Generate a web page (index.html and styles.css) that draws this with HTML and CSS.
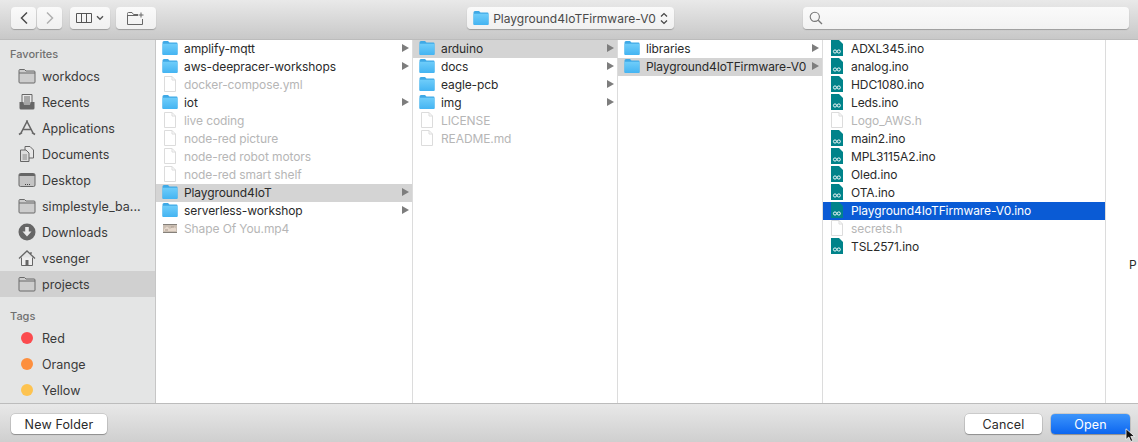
FILE: index.html
```html
<!DOCTYPE html>
<html lang="en">
<head>
  <meta charset="UTF-8">
  <title>Open</title>
  <link rel="stylesheet" href="styles.css">
</head>
<body>

  <svg class="defs" width="0" height="0">
    <defs>
      <linearGradient id="blue" x1="0" y1="0" x2="0" y2="1">
        <stop offset="0" stop-color="#6fcdfa"/>
        <stop offset="1" stop-color="#44b4f2"/>
      </linearGradient>
      <symbol id="folder" viewBox="0 0 16 16">
        <path d="M.5 2.5Q.5 1 2 1H6L7.5 2.5H14.5Q15.5 2.5 15.5 3.5V14Q15.5 15 14.5 15H1.5Q.5 15 .5 14Z" fill="#3fa9e6"/>
        <path d="M.5 4.6Q.5 3.7 1.5 3.7H14.5Q15.5 3.7 15.5 4.6V14Q15.5 15 14.5 15H1.5Q.5 15 .5 14Z" fill="url(#blue)"/>
      </symbol>
      <symbol id="file" viewBox="0 0 16 16">
        <path d="M2.5 .5H10L13.5 4V15.5H2.5Z" fill="#fff" stroke="#dcdcdc"/>
        <path d="M10 .5V4H13.5" fill="none" stroke="#dcdcdc"/>
      </symbol>
      <symbol id="ino" viewBox="0 0 16 16">
        <path d="M2 0H10L14 4V16H2Z" fill="#00838a"/>
        <circle cx="6" cy="11.5" r="1.6" fill="none" stroke="#fff" stroke-width=".9"/>
        <circle cx="9.8" cy="11.5" r="1.6" fill="none" stroke="#fff" stroke-width=".9"/>
      </symbol>
      <symbol id="side-folder" viewBox="0 0 18 16">
        <path d="M1 2.5Q1 1.5 2 1.5H6.5L8 3H16Q17 3 17 4V14Q17 15 16 15H2Q1 15 1 14Z" fill="#cdcdcd" stroke="#6a6a6a"/>
        <path d="M1 5H17" stroke="#6a6a6a"/>
      </symbol>
      <symbol id="recents" viewBox="0 0 18 18">
        <path d="M4 1.5H14V10H4Z" fill="#e8e8e8" stroke="#666"/>
        <path d="M6 4H12M6 6H12M6 8H12" stroke="#666"/>
        <path d="M1.5 9H5L6 11.5H12L13 9H16.5V15Q16.5 16.5 15 16.5H3Q1.5 16.5 1.5 15Z" fill="#666"/>
      </symbol>
      <symbol id="apps" viewBox="0 0 18 18">
        <path d="M9.5 1.5L3 14M8.5 1.5L15 14M5 10.5H13M1 15.5L4 13.5M17 15.5L14 13.5" fill="none" stroke="#666" stroke-width="1.6"/>
      </symbol>
      <symbol id="docs" viewBox="0 0 18 18">
        <path d="M7 1.5H12L15.5 5V13H7Z" fill="#e8e8e8" stroke="#666"/>
        <path d="M2.5 5H8L11 8V16.5H2.5Z" fill="#ddd" stroke="#666"/>
        <path d="M4.5 10H9M4.5 12H9M4.5 14H9" stroke="#888"/>
      </symbol>
      <symbol id="desktop" viewBox="0 0 18 16">
        <rect x="1" y="1.5" width="16" height="13" rx="1.5" fill="#c4c4c4" stroke="#666"/>
        <path d="M1 3.5Q1 1.5 3 1.5H15Q17 1.5 17 3.5V4H1Z" fill="#666"/>
        <path d="M7 12.5H8M9 12.5H10M11 12.5H12" stroke="#444"/>
      </symbol>
      <symbol id="download" viewBox="0 0 18 18">
        <circle cx="9" cy="9" r="8.5" fill="#666"/>
        <path d="M7.2 4H10.8V8.5H13.5L9 13.5L4.5 8.5H7.2Z" fill="#e8e8e8"/>
      </symbol>
      <symbol id="home" viewBox="0 0 18 18">
        <path d="M1 9.5L9 2L17 9.5M13 3V6" fill="none" stroke="#666" stroke-width="1.3"/>
        <path d="M3.5 8.5V16.5H14.5V8.5" fill="#eee" stroke="#666"/>
        <path d="M7.5 11H10.5V16.5H7.5Z" fill="#666"/>
      </symbol>
    </defs>
  </svg>

  <div class="dialog">

    <header class="toolbar">
      <div class="btn-group">
        <button class="btn btn-nav">
          <svg width="10" height="14" viewBox="0 0 10 14"><path d="M8 1.5L2.5 7L8 12.5" fill="none" stroke="#4a4a4a" stroke-width="1.5"/></svg>
        </button>
        <button class="btn btn-nav btn-next">
          <svg width="10" height="14" viewBox="0 0 10 14"><path d="M2 1.5L7.5 7L2 12.5" fill="none" stroke="#b0b0b0" stroke-width="1.5"/></svg>
        </button>
      </div>
      <button class="btn btn-view">
        <svg width="16" height="10" viewBox="0 0 16 10"><path d="M.5 .5H15.5V9.5H.5ZM5.5 .5V9.5M10.5 .5V9.5" fill="none" stroke="#555"/></svg>
        <svg width="8" height="6" viewBox="0 0 8 6"><path d="M1 1.2L4 4.2L7 1.2" fill="none" stroke="#555" stroke-width="1.4"/></svg>
      </button>
      <button class="btn btn-new">
        <svg width="18" height="13" viewBox="0 0 18 13"><path d="M.5 2.5V1.5Q.5 .5 1.5 .5H5L6.5 2.5H11M.5 2.5V12.5H15.5V7M.5 3.5H11M14 .5V5.5M11.5 3H16.5" fill="none" stroke="#666"/></svg>
      </button>
      <button class="btn btn-path">
        <svg class="ico" width="16" height="16"><use href="#folder"/></svg>
        <span class="path-name">Playground4IoTFirmware-V0</span>
        <svg width="8" height="13" viewBox="0 0 8 13"><path d="M1 4.5L4 1.5L7 4.5M1 8.5L4 11.5L7 8.5" fill="none" stroke="#444" stroke-width="1.2"/></svg>
      </button>
      <div class="search">
        <svg width="14" height="14" viewBox="0 0 14 14"><circle cx="5.8" cy="5.8" r="4.6" fill="none" stroke="#777" stroke-width="1.1"/><path d="M9.2 9.2L13 13" stroke="#777" stroke-width="1.3"/></svg>
      </div>
    </header>

    <div class="main">
      <aside class="sidebar">
        <div class="side-head">Favorites</div>
        <div class="side-item"><svg class="side-ico"><use href="#side-folder"/></svg>workdocs</div>
        <div class="side-item"><svg class="side-ico"><use href="#recents"/></svg>Recents</div>
        <div class="side-item"><svg class="side-ico"><use href="#apps"/></svg>Applications</div>
        <div class="side-item"><svg class="side-ico"><use href="#docs"/></svg>Documents</div>
        <div class="side-item"><svg class="side-ico"><use href="#desktop"/></svg>Desktop</div>
        <div class="side-item"><svg class="side-ico"><use href="#side-folder"/></svg>simplestyle_ba...</div>
        <div class="side-item"><svg class="side-ico"><use href="#download"/></svg>Downloads</div>
        <div class="side-item"><svg class="side-ico"><use href="#home"/></svg>vsenger</div>
        <div class="side-item active"><svg class="side-ico"><use href="#side-folder"/></svg>projects</div>
        <div class="side-head side-head-tags">Tags</div>
        <div class="side-item"><span class="tag tag-red"></span>Red</div>
        <div class="side-item"><span class="tag tag-orange"></span>Orange</div>
        <div class="side-item"><span class="tag tag-yellow"></span>Yellow</div>
      </aside>

      <section class="col col-1">
        <div class="row"><svg class="ico"><use href="#folder"/></svg><span class="name">amplify-mqtt</span><i class="arrow"></i></div>
        <div class="row"><svg class="ico"><use href="#folder"/></svg><span class="name">aws-deepracer-workshops</span><i class="arrow"></i></div>
        <div class="row dim"><svg class="ico"><use href="#file"/></svg><span class="name">docker-compose.yml</span></div>
        <div class="row"><svg class="ico"><use href="#folder"/></svg><span class="name">iot</span><i class="arrow"></i></div>
        <div class="row dim"><svg class="ico"><use href="#file"/></svg><span class="name">live coding</span></div>
        <div class="row dim"><svg class="ico"><use href="#file"/></svg><span class="name">node-red picture</span></div>
        <div class="row dim"><svg class="ico"><use href="#file"/></svg><span class="name">node-red robot motors</span></div>
        <div class="row dim"><svg class="ico"><use href="#file"/></svg><span class="name">node-red smart shelf</span></div>
        <div class="row open"><svg class="ico"><use href="#folder"/></svg><span class="name">Playground4IoT</span><i class="arrow"></i></div>
        <div class="row"><svg class="ico"><use href="#folder"/></svg><span class="name">serverless-workshop</span><i class="arrow"></i></div>
        <div class="row dim">
          <svg class="ico" viewBox="0 0 16 16"><rect x="1" y="4" width="14" height="9" fill="#cbbfb3"/><rect x="1" y="4" width="14" height="1" fill="#85807a"/><rect x="1" y="12" width="14" height="1" fill="#85807a"/><path d="M2 9L5 6.5L8 9L11 6.5L14 8.5V11H2Z" fill="#e6d8cc"/><path d="M3 10H6M9 7H12" stroke="#a8998c"/></svg>
          <span class="name">Shape Of You.mp4</span>
        </div>
      </section>

      <section class="col col-2">
        <div class="row open"><svg class="ico"><use href="#folder"/></svg><span class="name">arduino</span><i class="arrow"></i></div>
        <div class="row"><svg class="ico"><use href="#folder"/></svg><span class="name">docs</span><i class="arrow"></i></div>
        <div class="row"><svg class="ico"><use href="#folder"/></svg><span class="name">eagle-pcb</span><i class="arrow"></i></div>
        <div class="row"><svg class="ico"><use href="#folder"/></svg><span class="name">img</span><i class="arrow"></i></div>
        <div class="row dim"><svg class="ico"><use href="#file"/></svg><span class="name">LICENSE</span></div>
        <div class="row dim"><svg class="ico"><use href="#file"/></svg><span class="name">README.md</span></div>
      </section>

      <section class="col col-3">
        <div class="row"><svg class="ico"><use href="#folder"/></svg><span class="name">libraries</span><i class="arrow"></i></div>
        <div class="row open"><svg class="ico"><use href="#folder"/></svg><span class="name">Playground4IoTFirmware-V0</span><i class="arrow"></i></div>
      </section>

      <section class="col col-4">
        <div class="row"><svg class="ico"><use href="#ino"/></svg><span class="name">ADXL345.ino</span></div>
        <div class="row"><svg class="ico"><use href="#ino"/></svg><span class="name">analog.ino</span></div>
        <div class="row"><svg class="ico"><use href="#ino"/></svg><span class="name">HDC1080.ino</span></div>
        <div class="row"><svg class="ico"><use href="#ino"/></svg><span class="name">Leds.ino</span></div>
        <div class="row dim"><svg class="ico"><use href="#file"/></svg><span class="name">Logo_AWS.h</span></div>
        <div class="row"><svg class="ico"><use href="#ino"/></svg><span class="name">main2.ino</span></div>
        <div class="row"><svg class="ico"><use href="#ino"/></svg><span class="name">MPL3115A2.ino</span></div>
        <div class="row"><svg class="ico"><use href="#ino"/></svg><span class="name">Oled.ino</span></div>
        <div class="row"><svg class="ico"><use href="#ino"/></svg><span class="name">OTA.ino</span></div>
        <div class="row selected"><svg class="ico"><use href="#ino"/></svg><span class="name">Playground4IoTFirmware-V0.ino</span></div>
        <div class="row dim"><svg class="ico"><use href="#file"/></svg><span class="name">secrets.h</span></div>
        <div class="row"><svg class="ico"><use href="#ino"/></svg><span class="name">TSL2571.ino</span></div>
      </section>

      <section class="preview">P</section>
    </div>

    <footer class="footer">
      <button class="btn-foot btn-folder">New Folder</button>
      <button class="btn-foot btn-cancel">Cancel</button>
      <button class="btn-foot btn-open">Open</button>
    </footer>

    <svg class="cursor" width="13" height="15" viewBox="0 0 13 15"><path d="M1 .8V11.5L3.8 9L5.8 13.5L7.8 12.6L5.8 8.4H9.6Z" fill="#111" stroke="#fff" stroke-width=".8"/></svg>
  </div>

</body>
</html>
```

FILE: styles.css
```css
* {
  box-sizing: border-box;
}

body {
  margin: 0;
  font-family: "Inter", "Liberation Sans", sans-serif;
  font-size: 12px;
  color: #2a2a2a;
  background: #fff;
}

.defs {
  display: block;
  height: 0;
}

.dialog {
  position: relative;
  display: flex;
  flex-direction: column;
  width: 1138px;
  height: 442px;
  overflow: hidden;
}

/* toolbar */
.toolbar {
  display: flex;
  align-items: center;
  height: 40px;
  padding: 7px 9px 10px 11px;
  background: linear-gradient(#e9e9e9, #c8c8c8);
  border-bottom: 1px solid #bcbcbc;
}

.btn-group {
  display: flex;
  gap: 1px;
}

.btn {
  display: flex;
  align-items: center;
  justify-content: center;
  height: 22px;
  padding: 0;
  font: inherit;
  background: linear-gradient(#fafafa, #f0f0f0);
  border: none;
  border-radius: 4px;
  box-shadow: 0 1px 1px rgba(0,0,0,0.25);
}

.btn-nav {
  width: 25px;
}

.btn-view {
  width: 40px;
  margin-left: 8px;
  gap: 4px;
}

.btn-new {
  width: 40px;
  margin-left: 6px;
}

.btn-path {
  width: 207px;
  margin-left: 311px;
  gap: 4px;
  color: #4a4a4a;
}

.btn-path .ico {
  margin: 0;
}

.search {
  display: flex;
  align-items: center;
  width: 326px;
  height: 22px;
  margin-left: 129px;
  padding-left: 6px;
  background: linear-gradient(#fafafa, #f2f2f2);
  border-radius: 4px;
  box-shadow: 0 1px 1px rgba(0,0,0,0.25);
}

/* browser area */
.main {
  display: flex;
  flex: 1;
  min-height: 0;
}

.sidebar {
  width: 156px;
  flex-shrink: 0;
  background: #e4e5e5;
  border-right: 1px solid #c6c6c6;
  overflow: hidden;
}

.side-head {
  height: 23px;
  padding: 7px 0 0 10px;
  font-size: 11px;
  line-height: 14px;
  font-weight: 500;
  color: #707070;
}

.side-head-tags {
  height: 28px;
  padding-top: 12px;
}

.side-item {
  display: flex;
  align-items: center;
  height: 26px;
  padding-left: 18px;
  font-size: 12.5px;
  color: #3a3a3a;
}

.side-item.active {
  background: #d0d0d0;
}

.side-ico {
  width: 18px;
  height: 18px;
  margin-right: 6px;
  flex-shrink: 0;
}

.tag {
  width: 12px;
  height: 12px;
  margin: 0 9px 0 3px;
  border-radius: 50%;
}

.tag-red { background: #fb4b4e; }
.tag-orange { background: #fd8f3e; }
.tag-yellow { background: #fdc350; }

.col {
  flex-shrink: 0;
  background: #fff;
  border-right: 1px solid #dcdcdc;
}

.col-1 { width: 257px; }
.col-2 { width: 205px; }
.col-3 { width: 205px; }
.col-4 { width: 283px; }

.row {
  display: flex;
  align-items: center;
  height: 18px;
  padding: 0 3px 2px 6px;
  letter-spacing: -0.1px;
}

.row .name {
  flex: 1;
  white-space: nowrap;
  overflow: hidden;
}

.ico {
  width: 16px;
  height: 16px;
  margin-right: 6px;
  flex-shrink: 0;
}

.arrow {
  width: 0;
  height: 0;
  border-left: 7px solid #7d7d7d;
  border-top: 4px solid transparent;
  border-bottom: 4px solid transparent;
}

.dim {
  color: #b6b6b6;
}

.open {
  background: #d4d4d4;
}

.selected {
  background: #0a5bd5;
  color: #fff;
}

.preview {
  flex: 1;
  min-width: 0;
  padding: 217px 0 0 23px;
  color: #2a2a2a;
}

/* bottom bar */
.footer {
  display: flex;
  align-items: center;
  height: 39px;
  padding: 2px 8px 0 11px;
  background: linear-gradient(#e8e8e8, #cfcfcf);
  border-top: 1px solid #bcbcbc;
}

.btn-foot {
  height: 20px;
  padding: 0;
  font: inherit;
  font-size: 12.5px;
  letter-spacing: 0.15px;
  color: #2a2a2a;
  background: #fff;
  border: none;
  border-radius: 4px;
  box-shadow: 0 0 0 .5px rgba(0,0,0,0.2), 0 1px 1px rgba(0,0,0,0.25);
}

.btn-folder {
  width: 96px;
}

.btn-cancel {
  width: 77px;
  margin-left: auto;
}

.btn-open {
  width: 79px;
  margin-left: 9px;
  color: #fff;
  background: linear-gradient(#3d95fb, #0c66f0);
}

.cursor {
  position: absolute;
  left: 1125px;
  top: 428px;
}
```
